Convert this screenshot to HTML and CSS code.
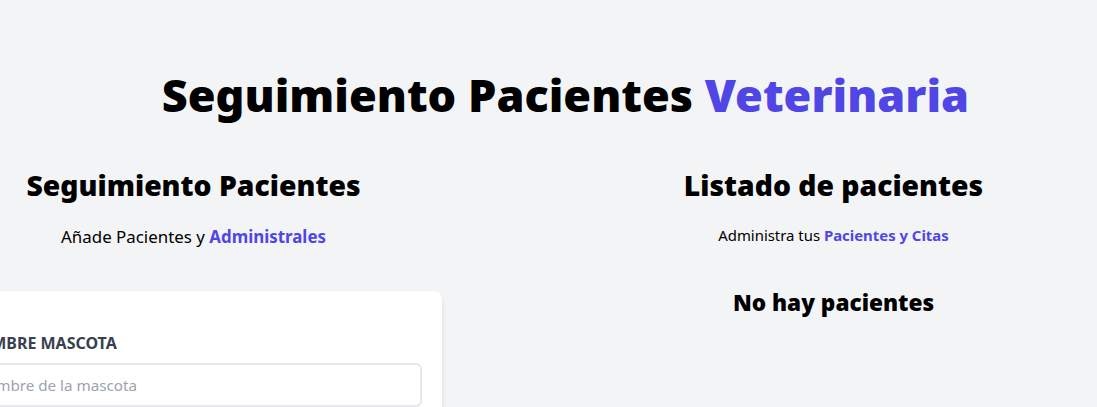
FILE: index.html
```html
<!DOCTYPE html>
<html lang="es">
<head>
<meta charset="utf-8">
<title>Seguimiento Pacientes Veterinaria</title>
<link rel="stylesheet" href="styles.css">
</head>
<body>
<div class="container">
  <h1 class="title">Seguimiento Pacientes <span class="accent">Veterinaria</span></h1>
  <div class="main">
    <div class="form-col">
      <h2 class="col-title">Seguimiento Pacientes</h2>
      <p class="lead">Añade Pacientes y <span class="accent-bold">Administrales</span></p>
      <form class="card">
        <div class="field">
          <label class="label" for="mascota">Nombre Mascota</label>
          <input id="mascota" class="input" type="text" placeholder="Nombre de la mascota">
        </div>
        <div class="field">
          <label class="label" for="propietario">Nombre Propietario</label>
          <input id="propietario" class="input" type="text" placeholder="Nombre del propietario">
        </div>
      </form>
    </div>
    <div class="list-col">
      <h2 class="col-title">Listado de pacientes</h2>
      <p class="lead-sm">Administra tus <span class="accent-bold">Pacientes y Citas</span></p>
      <h2 class="empty">No hay pacientes</h2>
    </div>
  </div>
</div>
</body>
</html>
```
FILE: styles.css
```css
body {
  margin: 0;
  background: #f3f4f6;
  font-family: "Noto Sans", "Open Sans", sans-serif;
  color: #000;
  overflow: hidden;
}
.container {
  width: 1280px;
  margin: 71px 0 0 -74.5px;
}
.title {
  font-weight: 900;
  font-size: 45px;
  line-height: 48px;
  text-align: center;
  width: 66.6667%;
  margin: 0 auto;
  white-space: nowrap;
}
.accent { color: #4f46e5; }
.accent-bold { color: #4f46e5; font-weight: 700; }
.main {
  margin-top: 48px;
  display: flex;
}
.form-col {
  flex: 0 1 40%;
  margin: 0 20px;
}
.list-col {
  flex: 0 1 60%;
}
.col-title {
  font-weight: 900;
  font-size: 28.3px;
  line-height: 36px;
  text-align: center;
  margin: 0;
}
.lead {
  font-size: 16.9px;
  line-height: 28px;
  margin: 20px 0 40px;
  text-align: center;
}
.lead-sm {
  font-size: 14.9px;
  line-height: 24px;
  margin: 20px 0 40px;
  text-align: center;
}
.empty {
  font-weight: 900;
  font-size: 22.6px;
  line-height: 32px;
  text-align: center;
  margin: 0;
}
.card {
  background: #fff;
  box-shadow: 0 4px 6px -1px rgba(0,0,0,.1), 0 2px 4px -2px rgba(0,0,0,.1);
  border-radius: 8px;
  padding: 40px 20px;
  margin-bottom: 40px;
}
.field { margin-bottom: 20px; }
.label {
  display: block;
  color: #374151;
  text-transform: uppercase;
  font-weight: 700;
  font-size: 16px;
  line-height: 24px;
}
.input {
  box-sizing: border-box;
  display: block;
  width: 100%;
  border: 2px solid #e5e7eb;
  padding: 8px;
  margin-top: 8px;
  border-radius: 6px;
  font-family: inherit;
  font-size: 15.2px;
  line-height: 24px;
  background: #fff;
}
.input::placeholder { color: #9ca3af; }
```
